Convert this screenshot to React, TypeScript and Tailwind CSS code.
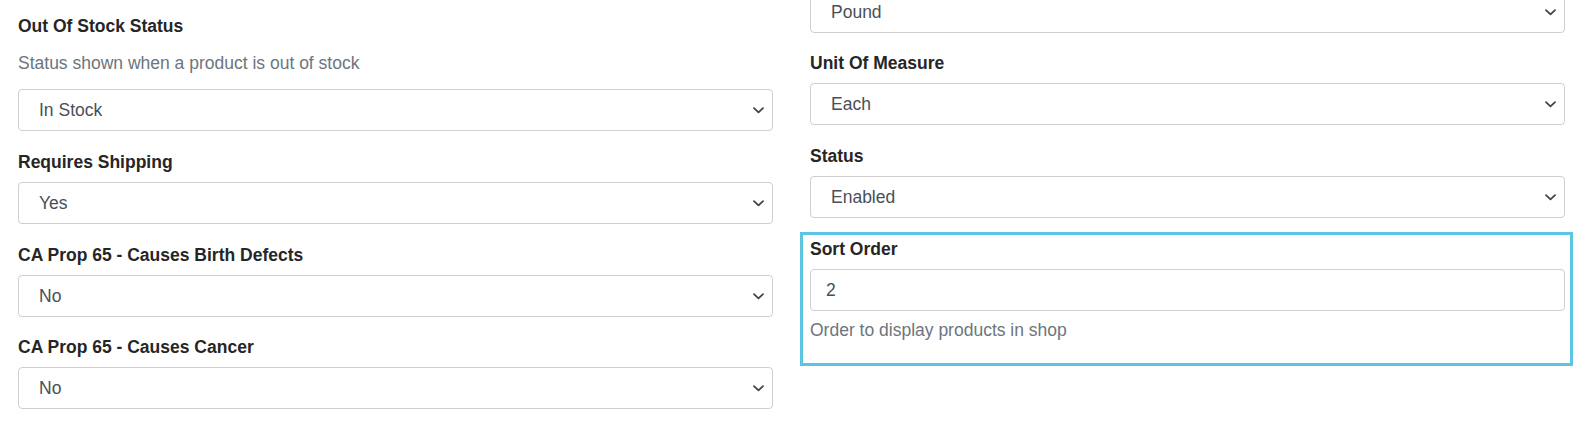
import React from "react";

const font = { fontFamily: '"Liberation Sans", Arial, sans-serif' };

function Chevron() {
  return (
    <svg width="11" height="7" viewBox="0 0 11 7" className="shrink-0">
      <polyline points="1,1.2 5.5,5.4 10,1.2" fill="none" stroke="#444" strokeWidth="1.8" strokeLinecap="round" strokeLinejoin="round" />
    </svg>
  );
}

function SelectBox({ value }: { value: string }) {
  return (
    <div className="h-[42px] flex items-center justify-between border border-[#cfcfcf] rounded-[4px] bg-white pl-[20px] pr-[8px] text-[17.5px] text-[#495057]">
      <span>{value}</span>
      <Chevron />
    </div>
  );
}

function InputBox({ value }: { value: string }) {
  return (
    <div className="h-[42px] flex items-center border border-[#cfcfcf] rounded-[4px] bg-white pl-[15px] text-[17.5px] text-[#495057]">
      {value}
    </div>
  );
}

function Label({ children }: { children: React.ReactNode }) {
  return <div className="text-[17.5px] leading-[24px] font-bold text-[#262626] mb-[8px]">{children}</div>;
}

function Group({ label, value, mb = "mb-[19px]" }: { label: string; value: string; mb?: string }) {
  return (
    <div className={mb}>
      <Label>{label}</Label>
      <SelectBox value={value} />
    </div>
  );
}

export default function App() {
  return (
    <div style={font} className="w-[1583px] h-[438px] overflow-hidden bg-white">
      <div className="flex gap-x-[37px] pl-[18px] pt-[14px]">
        <div className="w-[755px] shrink-0">
          <div className="mb-[19px]">
            <Label>Out Of Stock Status</Label>
            <div className="text-[17.5px] leading-[24px] text-[#6c757d] mt-[13px] mb-[14px]">Status shown when a product is out of stock</div>
            <SelectBox value="In Stock" />
          </div>
          <Group label="Requires Shipping" value="Yes" />
          <Group label="CA Prop 65 - Causes Birth Defects" value="No" mb="mb-[18px]" />
          <Group label="CA Prop 65 - Causes Cancer" value="No" />
        </div>
        <div className="w-[755px] shrink-0 -mt-[23px]">
          <div className="mb-[18px]">
            <SelectBox value="Pound" />
          </div>
          <Group label="Unit Of Measure" value="Each" mb="mb-[19px]" />
          <Group label="Status" value="Enabled" mb="mb-[14px]" />
          <div className="-ml-[10px] -mr-[8px] border-[3px] border-[#5bc5e3] pl-[7px] pr-[5px] pt-[2px] pb-[21px]">
            <Label>Sort Order</Label>
            <InputBox value="2" />
            <div className="text-[17.5px] leading-[24px] text-[#6c757d] mt-[7px]">Order to display products in shop</div>
          </div>
        </div>
      </div>
    </div>
  );
}
